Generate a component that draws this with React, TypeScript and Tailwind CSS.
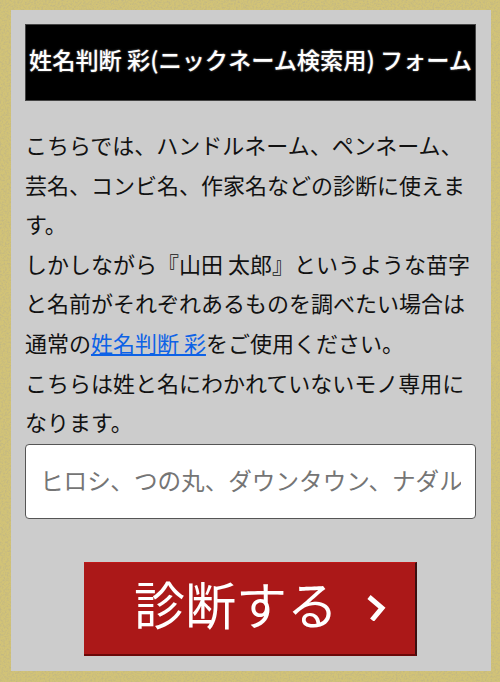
const font = { fontFamily: '"Noto Sans CJK JP", "Liberation Sans", sans-serif' }

export default function App() {
  return (
    <div style={font} className="relative h-[682px] w-[500px] overflow-hidden bg-[#d2c377] pt-[10px] pr-[9px] pb-[11px] pl-[11px]">
      {/* gold paper texture behind the panel */}
      <svg className="absolute inset-0" width="500" height="682">
        <filter id="paper" x="0" y="0" width="100%" height="100%">
          <feTurbulence type="fractalNoise" baseFrequency="0.55" numOctaves="3" />
          <feColorMatrix values="0 0 0 0 0.55  0 0 0 0 0.48  0 0 0 0 0.22  2.4 0 0 0 -0.95" />
        </filter>
        <rect width="500" height="682" filter="url(#paper)" />
      </svg>
      <div className="relative h-[661px] bg-[#cccccc] pt-[14px] pr-[15px] pl-[14px]">
        <h1 className="flex h-[77px] items-center justify-center border border-[#444444] bg-black pb-[6px] text-[23.2px] font-medium whitespace-nowrap text-white [text-shadow:0_0_2px_#888888]">
          姓名判断 彩(ニックネーム検索用) フォーム
        </h1>
        <p className="mt-[24px] text-[22px] leading-[39.6px] text-[#111111]">
          こちらでは、ハンドルネーム、ペンネーム、芸名、コンビ名、作家名などの診断に使えます。
          <br />
          しかしながら『山田 太郎』というような苗字と名前がそれぞれあるものを調べたい場合は通常の
          <a href="#" className="text-[#0d62e6] underline">姓名判断 彩</a>
          をご使用ください。
          <br />
          こちらは姓と名にわかれていないモノ専用になります。
        </p>
        <input
          readOnly
          placeholder="ヒロシ、つの丸、ダウンタウン、ナダル"
          className="mt-[2px] block h-[75px] w-full rounded-[4px] border border-[#555555] bg-white px-[14px] pb-[2px] text-[23.6px] placeholder:text-[#757575]"
        />
        <div className="mt-[43px] flex justify-center">
          <button className="flex h-[94px] w-[333px] items-center justify-start gap-[29px] border-t border-r-2 border-b-2 border-t-[#c01818] border-r-[#3a1010] border-b-[#6b0808] bg-[#ab1818] pl-[50px] text-white">
            <span className="pb-[10px] text-[51px] leading-none font-normal">診断する</span>
            <svg width="19" height="26" viewBox="0 0 19 26" fill="none" stroke="#ffffff" strokeWidth="5">
              <path d="M2 2 L15 13 L5 25" />
            </svg>
          </button>
        </div>
      </div>
    </div>
  )
}
